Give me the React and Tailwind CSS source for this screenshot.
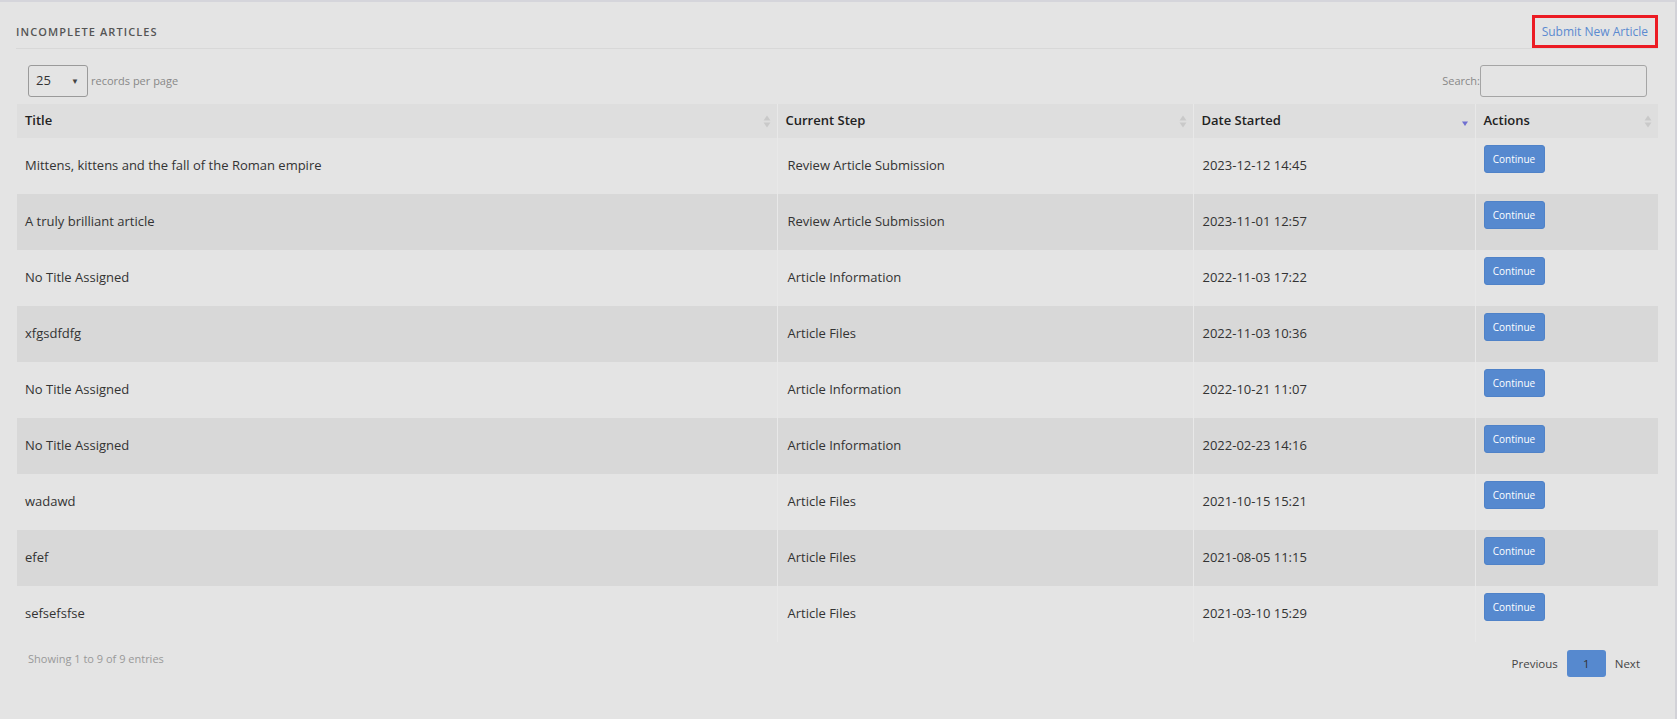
import React from 'react';

const rows = [
  { title: 'Mittens, kittens and the fall of the Roman empire', step: 'Review Article Submission', date: '2023-12-12 14:45' },
  { title: 'A truly brilliant article', step: 'Review Article Submission', date: '2023-11-01 12:57' },
  { title: 'No Title Assigned', step: 'Article Information', date: '2022-11-03 17:22' },
  { title: 'xfgsdfdfg', step: 'Article Files', date: '2022-11-03 10:36' },
  { title: 'No Title Assigned', step: 'Article Information', date: '2022-10-21 11:07' },
  { title: 'No Title Assigned', step: 'Article Information', date: '2022-02-23 14:16' },
  { title: 'wadawd', step: 'Article Files', date: '2021-10-15 15:21' },
  { title: 'efef', step: 'Article Files', date: '2021-08-05 11:15' },
  { title: 'sefsefsfse', step: 'Article Files', date: '2021-03-10 15:29' },
];

function SortBoth() {
  return (
    <svg width="8" height="13" viewBox="0 0 8 13" className="shrink-0">
      <path d="M4 0.5 L7.5 5.5 H0.5 Z" fill="#c9c9c9" />
      <path d="M4 12.5 L7.5 7.5 H0.5 Z" fill="#c9c9c9" />
    </svg>
  );
}

function SortDesc() {
  return (
    <svg width="8" height="13" viewBox="0 0 8 13" className="shrink-0">
      <path d="M4 11 L7 6.5 H1 Z" fill="#6f6fd0" />
    </svg>
  );
}

function HeadCell({ label, sort, first }) {
  return (
    <th className={`h-[34px] px-[8px] pr-[6px] text-left font-semibold text-[13px] text-[#222] ${first ? '' : 'border-l border-[#e8e8e8]'}`}>
      <div className="flex items-center justify-between">
        <span>{label}</span>
        {sort === 'desc' ? <SortDesc /> : <SortBoth />}
      </div>
    </th>
  );
}

export default function App() {
  return (
    <div
      className="min-h-screen w-full bg-[#e4e4e4] border-t-2 border-t-[#d5d5db] border-r-2 border-r-[#d2d2d8] pl-[16px] pr-[17px] text-[#333]"
      style={{ fontFamily: '"Open Sans", "Liberation Sans", sans-serif' }}
    >
      <div className="flex items-center justify-between pt-[13px] border-b border-[#d8d8d8]">
        <h2 className="mt-[2px] text-[11px] font-semibold tracking-[0.1em] uppercase text-[#555]">Incomplete Articles</h2>
        <div className="h-[33px] border-[3px] border-[#ec1c24] px-[7px] flex items-center">
          <a href="#" className="text-[12px] text-[#5b8ad0]">Submit New Article</a>
        </div>
      </div>

      <div className="flex items-center justify-between mt-[16px] pl-[12px] pr-[11px]">
        <div className="flex items-center">
          <div className="w-[60px] h-[32px] border border-[#9a9a9a] rounded-[3px] flex items-center justify-between pl-[7px] pr-[8px] text-[13px] text-[#333]">
            <span>25</span>
            <span className="text-[8px] text-[#444]">▼</span>
          </div>
          <span className="ml-[3px] text-[11px] text-[#888]">records per page</span>
        </div>
        <div className="flex items-center">
          <span className="text-[11px] text-[#888]">Search:</span>
          <input className="w-[167px] h-[32px] border border-[#a5a5a5] rounded-[3px] bg-transparent outline-none" />
        </div>
      </div>

      <table className="mt-[7px] ml-px w-[1641px] table-fixed border-collapse">
        <colgroup>
          <col className="w-[760px]" />
          <col className="w-[416px]" />
          <col className="w-[282px]" />
          <col className="w-[183px]" />
        </colgroup>
        <thead>
          <tr className="bg-[#dedede]">
            <HeadCell label="Title" first />
            <HeadCell label="Current Step" />
            <HeadCell label="Date Started" sort="desc" />
            <HeadCell label="Actions" />
          </tr>
        </thead>
        <tbody>
          {rows.map((r, i) => (
            <tr key={i} className={`h-[56px] text-[13px] text-[#333] ${i % 2 === 1 ? 'bg-[#d8d8d8]' : 'bg-[#e4e4e4]'}`}>
              <td className="px-[8px] align-middle">{r.title}</td>
              <td className="px-[10px] align-middle border-l border-[#e8e8e8]">{r.step}</td>
              <td className="px-[9px] align-middle border-l border-[#e8e8e8]">{r.date}</td>
              <td className="px-[8px] pt-[7px] align-top border-l border-[#e8e8e8]">
                <button className="w-[61px] h-[28px] rounded-[3px] bg-[#5689cf] border border-[#4f82c8] text-white text-[10px]">Continue</button>
              </td>
            </tr>
          ))}
        </tbody>
      </table>

      <div className="flex items-start justify-between pl-[12px] pr-[18px]">
        <div className="mt-[9px] text-[11px] text-[#999]">Showing 1 to 9 of 9 entries</div>
        <div className="mt-[8px] flex items-center text-[11.5px] text-[#444]">
          <span>Previous</span>
          <span className="ml-[9px] w-[39px] h-[27px] rounded-[3px] bg-[#5689cf] flex items-center justify-center text-[#333]">1</span>
          <span className="ml-[9px]">Next</span>
        </div>
      </div>
    </div>
  );
}
